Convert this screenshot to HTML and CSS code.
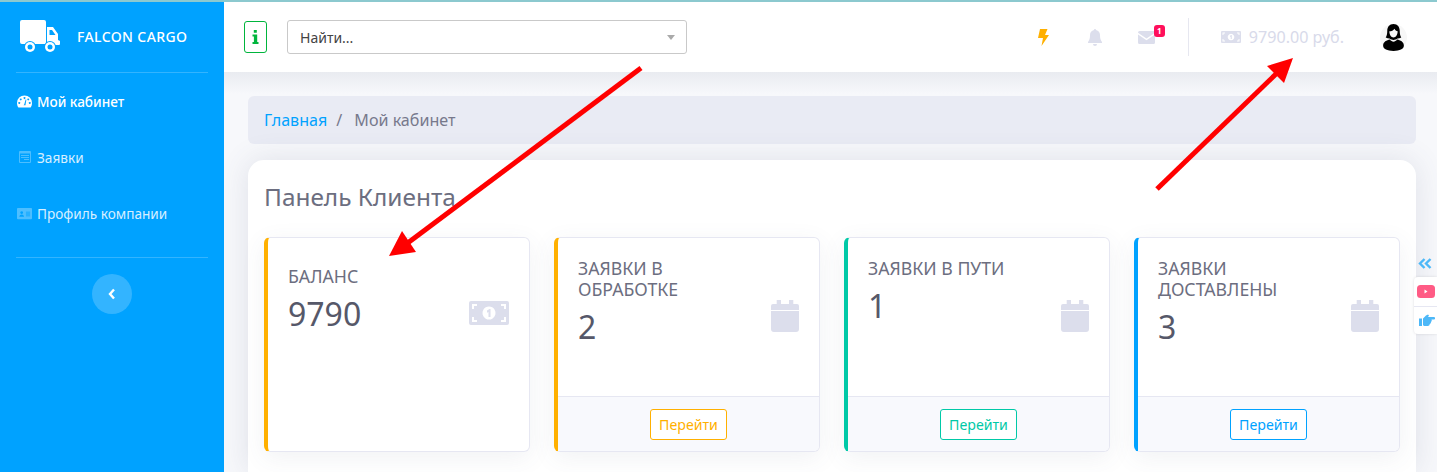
FILE: index.html
```html
<!DOCTYPE html>
<html lang="ru">
<head>
    <meta charset="UTF-8">
    <meta name="viewport" content="width=device-width, initial-scale=1.0">
    <title>Мой кабинет</title>
    <link rel="stylesheet" href="styles.css">
</head>
<body>

    <div class="page">
        <aside class="sidebar">
            <div class="brand">
                <svg class="brand-icon" viewBox="0 0 40 33"><path fill="#fff" d="M2 0h22a2 2 0 0 1 2 2v22H2a2 2 0 0 1-2-2V2a2 2 0 0 1 2-2zM27 7h6l5 7v6l2 1v3a1 1 0 0 1-1 1H27zM29.500 10v5h6l-3.500-5z" fill-rule="evenodd"/><circle cx="10" cy="27" r="6" fill="#00a2ff"/><circle cx="10" cy="27" r="5" fill="#fff"/><circle cx="10" cy="27" r="2.500" fill="#00a2ff"/><circle cx="30" cy="27" r="6" fill="#00a2ff"/><circle cx="30" cy="27" r="5" fill="#fff"/><circle cx="30" cy="27" r="2.500" fill="#00a2ff"/></svg>
                <span>FALCON CARGO</span>
            </div>
            <ul class="menu">
                <li class="menu-item active">
                    <svg class="menu-icon" viewBox="0 0 16 13"><path fill="#fff" fill-rule="evenodd" d="M8 0a8 8 0 0 1 8 8c0 1.800-.5 3.500-1.500 5h-13A8 8 0 0 1 0 8a8 8 0 0 1 8-8zM4 3.200a1 1 0 1 0 .01 0zM8 1.800a1 1 0 1 0 .01 0zM12 3.200a1 1 0 1 0 .01 0zM2.400 7a1 1 0 1 0 .01 0zM13.600 7a1 1 0 1 0 .01 0zM7 10.500h2L10 4.500l-.8-.2-1.400 5.200z"/></svg>
                    <span>Мой кабинет</span>
                </li>
                <li class="menu-item">
                    <svg class="menu-icon small" viewBox="0 0 12 12"><path fill="#fff" fill-rule="evenodd" d="M1 0h10a1 1 0 0 1 1 1v10a1 1 0 0 1-1 1H1a1 1 0 0 1-1-1V1a1 1 0 0 1 1-1zM1 2.500V11h10V2.500zM2 4h8v1H2zM2 6h8v1H2zM5 8h5v1H5z"/></svg>
                    <span>Заявки</span>
                </li>
                <li class="menu-item">
                    <svg class="menu-icon" viewBox="0 0 16 12"><path fill="#fff" fill-rule="evenodd" d="M1 0h14a1 1 0 0 1 1 1v10a1 1 0 0 1-1 1H1a1 1 0 0 1-1-1V1a1 1 0 0 1 1-1zM5 3.500a1.500 1.500 0 1 0 .01 0zM2.500 9.500h5c0-1.500-1-2.500-2.500-2.500s-2.500 1-2.500 2.500zM9.500 4h4.500v1H9.500zM9.500 6h4.500v1H9.500zM9.500 8h4.500v1H9.500z"/></svg>
                    <span>Профиль компании</span>
                </li>
            </ul>
            <button class="collapse">
                <svg viewBox="0 0 8 12"><path d="M6 1.500 2 6l4 4.500" fill="none" stroke="#fff" stroke-width="2.400"/></svg>
            </button>
        </aside>

        <div class="main">
            <header class="topbar">
                <span class="info-btn">
                    <svg viewBox="0 0 7 14"><path fill="#00b53d" d="M1.800 0h3v2.800h-3zM.5 4.500h4.700V12H6.500v2H.5v-2h1.400V6.500H.5z"/></svg>
                </span>
                <div class="search">
                    <span>Найти...</span>
                    <i class="caret"></i>
                </div>
                <div class="top-icons">
                    <svg class="top-icon bolt" viewBox="0 0 11 17"><path fill="#ffb000" d="M2 0h7.500L7 6h4L3.500 17 5 9H0z"/></svg>
                    <svg class="top-icon bell" viewBox="0 0 14 17"><path fill="#dcdeec" d="M7 0c.7 0 1 .5 1 1 2.500.5 4 2.500 4 5 0 3.500.5 5 2 7v1H0v-1c1.500-2 2-3.500 2-7 0-2.500 1.500-4.500 4-5 0-.5.3-1 1-1zM5 15h4a2 2 0 0 1-4 0z"/></svg>
                    <span class="mail">
                        <svg viewBox="0 0 17 13"><path fill="#dcdeec" d="M1.500 0h14A1.500 1.500 0 0 1 17 1.500v.3L8.500 7.500 0 1.800v-.3A1.500 1.500 0 0 1 1.500 0zM0 3.500l8.500 5.700L17 3.500v8A1.500 1.500 0 0 1 15.500 13h-14A1.500 1.500 0 0 1 0 11.500z"/></svg>
                        <b class="badge">1</b>
                    </span>
                </div>
                <div class="wallet">
                    <svg viewBox="0 0 40 24"><use href="#money"/></svg>
                    <span>9790.00 руб.</span>
                </div>
                <svg class="avatar" viewBox="0 0 26 26"><circle cx="13" cy="13" r="13" fill="#f7f7f7"/><path fill="#000" d="M13 0c4 0 6 3 6 6.500 0 3 .5 5 1.500 6.500-1.200.7-2.500 1-3.700 1-1 1-2.500 1.300-3.800 1.300s-2.800-.3-3.800-1.300c-1.200 0-2.500-.3-3.700-1C6.500 11.500 7 9.500 7 6.500 7 3 9 0 13 0z"/><path fill="#f7f7f7" d="M9 7c2 0 4-1 5-2.500.5 1.500 1.700 2.300 3 2.500 0 3.500-1.800 6-4 6s-4-2.500-4-6z"/><path fill="#000" d="M9.500 15c1 1.300 2.200 2 3.500 2s2.500-.7 3.500-2c3 .7 6.500 2 6.500 6 0 3-4 5-10 5S3 24 3 21c0-4 3.500-5.300 6.500-6z"/></svg>
            </header>

            <main class="content">
                <nav class="breadcrumb">
                    <a href="#">Главная</a>
                    <span class="sep">/</span>
                    <span>Мой кабинет</span>
                </nav>

                <section class="panel">
                    <h1>Панель Клиента</h1>
                    <div class="cards">
                        <div class="card orange">
                            <div class="card-body solo">
                                <div>
                                    <div class="card-title">БАЛАНС</div>
                                    <div class="card-value">9790</div>
                                </div>
                                <svg class="card-money" viewBox="0 0 40 24"><use href="#money"/></svg>
                            </div>
                        </div>
                        <div class="card orange">
                            <div class="card-body">
                                <div>
                                    <div class="card-title">ЗАЯВКИ В ОБРАБОТКЕ</div>
                                    <div class="card-value">2</div>
                                </div>
                                <svg class="card-cal" viewBox="0 0 28 32"><use href="#cal"/></svg>
                            </div>
                            <div class="card-foot"><a href="#" class="go">Перейти</a></div>
                        </div>
                        <div class="card green">
                            <div class="card-body">
                                <div>
                                    <div class="card-title">ЗАЯВКИ В ПУТИ</div>
                                    <div class="card-value">1</div>
                                </div>
                                <svg class="card-cal" viewBox="0 0 28 32"><use href="#cal"/></svg>
                            </div>
                            <div class="card-foot"><a href="#" class="go">Перейти</a></div>
                        </div>
                        <div class="card blue">
                            <div class="card-body">
                                <div>
                                    <div class="card-title">ЗАЯВКИ ДОСТАВЛЕНЫ</div>
                                    <div class="card-value">3</div>
                                </div>
                                <svg class="card-cal" viewBox="0 0 28 32"><use href="#cal"/></svg>
                            </div>
                            <div class="card-foot"><a href="#" class="go">Перейти</a></div>
                        </div>
                    </div>
                </section>
            </main>
        </div>
    </div>

    <div class="side-tools">
        <svg class="tools-toggle" viewBox="0 0 14 11"><path d="M6.500 1 2 5.500 6.500 10M12.500 1 8 5.500l4.500 4.500" fill="none" stroke="#4db8f8" stroke-width="2.400"/></svg>
        <div class="tools-box">
            <span class="tool">
                <svg viewBox="0 0 18 13"><rect width="18" height="13" rx="3.500" fill="#ff5b85"/><path d="M7.500 4.500l3 2-3 2z" fill="#fff"/></svg>
            </span>
            <span class="tool">
                <svg class="hand" viewBox="0 0 16 12"><path fill="#4db8f8" d="M0 4.500h3V12H0zM4 4.500 7 1.500 9 .5l1 1L9 3h6a1 1 0 0 1 0 2.500h-2.500c.5 1 .3 2-.5 2.500 0 1-.5 1.700-1.300 2 0 1-.7 2-2 2H6c-1 0-2-.5-2-1z"/></svg>
            </span>
        </div>
    </div>

    <svg class="hidden-defs" width="0" height="0">
        <symbol id="cal" viewBox="0 0 28 32">
            <path fill="#dcdeec" d="M5.700 0H10v4h8V0h4.300v4H26a2 2 0 0 1 2 2v4H0V6a2 2 0 0 1 2-2h3.700zM0 11h28v18a3 3 0 0 1-3 3H3a3 3 0 0 1-3-3z"/>
        </symbol>
        <symbol id="money" viewBox="0 0 40 24">
            <path fill="#dcdeec" fill-rule="evenodd" d="M2 0h36a2 2 0 0 1 2 2v20a2 2 0 0 1-2 2H2a2 2 0 0 1-2-2V2a2 2 0 0 1 2-2zM3 3v5h2V5h3V3zM32 3v2h3v3h2V3zM3 16v5h5v-2H5v-3zM35 16v3h-3v2h5v-5zM20 5.500a6.500 6.500 0 1 0 .01 0z"/>
            <path fill="#dcdeec" d="M18 9.500l2.500-1.500h1v8h-2v-5l-1.500.8z"/>
        </symbol>
    </svg>

    <svg class="arrows" viewBox="0 0 1437 472" width="1437" height="472">
        <path d="M641 68 405 245" stroke="#ff0000" stroke-width="5" fill="none"/>
        <path d="M389 256 402 231 416 252z" fill="#ff0000"/>
        <path d="M1157 189 1276 74" stroke="#ff0000" stroke-width="5" fill="none"/>
        <path d="M1293 58 1267 66 1284 83z" fill="#ff0000"/>
    </svg>

</body>
</html>
```

FILE: styles.css
```css
* {
    margin: 0;
    padding: 0;
    outline: none;
    box-sizing: border-box;
    font-family: "Noto Sans", sans-serif;
}

html, body {
    height: 472px;
    overflow: hidden;
}

body {
    background-color: #e9ebf0;
    position: relative;
}

body::before {
    content: "";
    position: absolute;
    top: 0;
    left: 0;
    width: 100%;
    height: 2px;
    background-color: #8cc9cf;
    z-index: 3;
}

.page {
    display: flex;
    height: 472px;
}

/* sidebar */
.sidebar {
    width: 224px;
    flex-shrink: 0;
    background-color: #00a2ff;
    padding: 0 16px;
    color: #fff;
}

.brand {
    height: 73px;
    display: flex;
    align-items: center;
    gap: 17px;
    padding-left: 4px;
    border-bottom: 1px solid rgba(255, 255, 255, .2);
    font-size: 14px;
    font-weight: 500;
    letter-spacing: .4px;
}

.brand-icon {
    width: 40px;
    height: 33px;
}

.menu {
    list-style: none;
    height: 185px;
    border-bottom: 1px solid rgba(255, 255, 255, .2);
}

.menu-item {
    height: 56px;
    display: flex;
    align-items: center;
    gap: 5px;
    padding-left: 1px;
    font-size: 13.600px;
    color: rgba(255, 255, 255, .85);
}

.menu-icon {
    width: 15px;
    height: 13px;
    opacity: .3;
}

.menu-icon.small {
    width: 12px;
    height: 12px;
    margin: 0 1px 0 2px;
}

.menu-item.active {
    color: #fff;
    font-weight: 500;
}

.menu-item.active .menu-icon {
    opacity: 1;
}

.collapse {
    display: flex;
    align-items: center;
    justify-content: center;
    width: 40px;
    height: 40px;
    margin: 16px auto 0;
    border: none;
    border-radius: 50%;
    background-color: rgba(255, 255, 255, .2);
}

.collapse svg {
    width: 8px;
    height: 12px;
}

/* top bar */
.main {
    flex: 1;
    min-width: 0;
}

.topbar {
    height: 72px;
    display: flex;
    align-items: center;
    padding: 2px 30px 0 20px;
    background-color: #fff;
    position: relative;
    z-index: 1;
}

.info-btn {
    width: 23px;
    height: 32px;
    display: flex;
    align-items: center;
    justify-content: center;
    border: 1px solid #00b53d;
    border-radius: 3px;
}

.info-btn svg {
    width: 7px;
    height: 14px;
}

.search {
    width: 400px;
    height: 34px;
    margin-left: 20px;
    padding: 0 11px 0 12px;
    display: flex;
    align-items: center;
    justify-content: space-between;
    border: 1px solid #c9c9c9;
    border-radius: 3px;
    font-size: 14px;
    color: #444;
}

.caret {
    border-top: 5px solid #aaa;
    border-left: 4px solid transparent;
    border-right: 4px solid transparent;
}

.top-icons {
    display: flex;
    align-items: center;
    gap: 36px;
    margin-left: auto;
    height: 38px;
    padding-right: 33px;
    border-right: 1px solid #e6e7f0;
}

.top-icon.bolt {
    width: 11px;
    height: 17px;
    margin-right: 3px;
}

.top-icon.bell {
    width: 14px;
    height: 17px;
}

.mail {
    position: relative;
    display: flex;
}

.mail svg {
    width: 17px;
    height: 13px;
}

.badge {
    position: absolute;
    top: -6px;
    right: -10px;
    width: 11px;
    height: 12px;
    border-radius: 3px;
    background-color: #ff0f5b;
    color: #fff;
    font-size: 8px;
    line-height: 12px;
    text-align: center;
}

.wallet {
    display: flex;
    align-items: center;
    gap: 8px;
    margin-left: 32px;
    font-size: 16.100px;
    color: #d8daea;
}

.wallet svg {
    width: 20px;
    height: 12px;
}

.avatar {
    width: 27px;
    height: 27px;
    margin-left: 36px;
}

/* content */
.content {
    position: relative;
    height: 400px;
    padding: 24px 21px 0 24px;
    background: linear-gradient(#e9ebf0, #f7f8fb 22px, #f7f8fb);
}

.breadcrumb {
    height: 48px;
    display: flex;
    align-items: center;
    gap: 9px;
    padding-left: 16px;
    border-radius: 6px;
    background-color: #e9ebf4;
    font-size: 16.100px;
    color: #77798c;
}

.breadcrumb a {
    color: #00a2ff;
    text-decoration: none;
}

.sep {
    margin-right: 3px;
}

.panel {
    margin-top: 16px;
    height: 312px;
    padding: 19px 16px 0;
    border-radius: 16px 16px 0 0;
    background-color: #fff;
    box-shadow: 0 0 30px rgba(80, 85, 120, .14);
}

.panel h1 {
    font-size: 24.400px;
    font-weight: 400;
    line-height: 36px;
    color: #6c6e80;
}

.cards {
    display: grid;
    grid-template-columns: repeat(4, 266px);
    gap: 24px;
    margin-top: 22px;
}

.card {
    height: 215px;
    display: flex;
    flex-direction: column;
    border: 1px solid #e6e7f2;
    border-left: 4px solid;
    border-radius: 6px;
    background-color: #fff;
    box-shadow: 0 6px 24px rgba(80, 85, 120, .08);
}

.card.orange { border-left-color: #ffb000; }
.card.green { border-left-color: #00c9a7; }
.card.blue { border-left-color: #00a2ff; }

.card-body {
    flex: 1;
    display: flex;
    justify-content: space-between;
    padding: 20px 20px 0 20px;
}

.card-body.solo {
    padding-top: 28px;
}

.card-body > div {
    max-width: 160px;
}

.card-title {
    font-size: 17.700px;
    line-height: 21px;
    color: #6c6e80;
}

.card-value {
    margin-top: 5px;
    font-size: 32px;
    line-height: 44px;
    color: #565869;
}

.card-money {
    width: 40px;
    height: 24px;
    margin-top: 35px;
}

.card-cal {
    width: 28px;
    height: 32px;
    margin-top: 42px;
}

.card-foot {
    height: 55px;
    display: flex;
    align-items: center;
    justify-content: center;
    border-top: 1px solid #e6e7f2;
    background-color: #f8f9fd;
    border-radius: 0 0 5px 0;
}

.go {
    width: 77px;
    height: 31px;
    display: flex;
    align-items: center;
    justify-content: center;
    border: 1px solid;
    border-radius: 3px;
    font-size: 14.200px;
    text-decoration: none;
    background-color: #fff;
}

.orange .go { color: #ffb000; border-color: #ffb000; }
.green .go { color: #00c9a7; border-color: #00c9a7; }
.blue .go { color: #00a2ff; border-color: #00a2ff; }

/* right floating tools */
.side-tools {
    position: absolute;
    top: 258px;
    right: 0;
    width: 23px;
}

.tools-toggle {
    display: block;
    width: 14px;
    height: 11px;
    margin-left: 4px;
}

.tools-box {
    margin-top: 8px;
    border-radius: 4px 0 0 4px;
    background-color: #fff;
    box-shadow: 0 0 3px rgba(0, 0, 0, .12);
}

.tool {
    height: 28.500px;
    display: flex;
    align-items: center;
    padding-left: 3px;
}

.tool + .tool {
    border-top: 1px solid #e6e7f2;
}

.tool svg {
    width: 18px;
    height: 13px;
}

.tool svg.hand {
    width: 16px;
    height: 12px;
    margin-left: 2px;
}

.hidden-defs {
    position: absolute;
}

.arrows {
    position: absolute;
    top: 0;
    left: 0;
    z-index: 5;
    pointer-events: none;
}
```
